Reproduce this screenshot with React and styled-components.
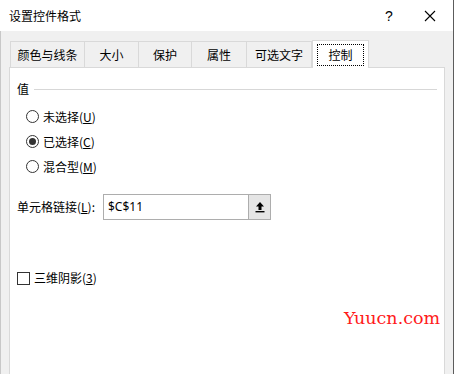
import React from 'react';
import styled, { createGlobalStyle } from 'styled-components';

const tabs = [
  { id: 'color', label: '颜色与线条', width: 75 },
  { id: 'size', label: '大小', width: 54 },
  { id: 'protect', label: '保护', width: 53 },
  { id: 'attr', label: '属性', width: 55 },
  { id: 'alt', label: '可选文字', width: 65 },
  { id: 'control', label: '控制', width: 57, active: true },
];

const options = [
  { id: 'u', label: '未选择', key: 'U' },
  { id: 'c', label: '已选择', key: 'C', checked: true },
  { id: 'm', label: '混合型', key: 'M' },
];

const GlobalStyle = createGlobalStyle`
  html, body {
    margin: 0;
    padding: 0;
    background: #ffffff;
  }
  body {
    font-family: "Noto Sans CJK SC", "Noto Sans", sans-serif;
    font-size: 12px;
    color: #000;
  }
`;

const App = () => {
  return (
    <>
      <GlobalStyle />
      <Window>
        <TitleBar>
          <Title>设置控件格式</Title>
          <Help>?</Help>
          <CloseButton>
            <svg width="12" height="12" viewBox="0 0 12 12">
              <path d="M1 1 L11 11 M11 1 L1 11" stroke="#000" strokeWidth="1.1" />
            </svg>
          </CloseButton>
        </TitleBar>
        <Body>
          <TabRow>
            {tabs.map((tab) => (
              <Tab key={tab.id} $active={tab.active} style={{ width: tab.width }}>
                <TabLabel $active={tab.active}>{tab.label}</TabLabel>
              </Tab>
            ))}
          </TabRow>
          <Panel>
            <Legend>
              <span>值</span>
              <Rule />
            </Legend>
            <RadioGroup>
              {options.map((opt) => (
                <RadioRow key={opt.id}>
                  <RadioCircle $checked={opt.checked} />
                  <span>
                    {opt.label}(<u>{opt.key}</u>)
                  </span>
                </RadioRow>
              ))}
            </RadioGroup>
            <LinkRow>
              <span>
                单元格链接(<u>L</u>):
              </span>
              <InputBox>
                <InputText>$C$11</InputText>
                <PickButton>
                  <svg width="10" height="12" viewBox="0 0 10 12">
                    <path d="M5 1 L9 5.5 L6.5 5.5 L6.5 9 L3.5 9 L3.5 5.5 L1 5.5 Z" fill="#000" />
                    <rect x="0.5" y="10" width="9" height="1.4" fill="#000" />
                  </svg>
                </PickButton>
              </InputBox>
            </LinkRow>
            <CheckRow>
              <CheckBox />
              <span>
                三维阴影(<u>3</u>)
              </span>
            </CheckRow>
            <Watermark>Yuucn.com</Watermark>
          </Panel>
        </Body>
      </Window>
    </>
  );
};

const Window = styled.div`
  width: 454px;
  height: 374px;
  box-sizing: border-box;
  display: flex;
  flex-direction: column;
  background: #f0f0f0;
  border-right: 1px solid #5c5c5c;
  overflow: hidden;
`;

const TitleBar = styled.div`
  height: 31px;
  flex-shrink: 0;
  display: flex;
  align-items: center;
  background: #ffffff;
  padding-left: 9px;
`;

const Title = styled.div`
  flex: 1;
  font-size: 12px;
  line-height: 16px;
`;

const Help = styled.div`
  font-family: "Liberation Sans", sans-serif;
  font-size: 14px;
  width: 20px;
  text-align: center;
  margin-right: 25px;
`;

const CloseButton = styled.div`
  width: 12px;
  height: 12px;
  display: flex;
  margin-right: 17px;
`;

const Body = styled.div`
  flex: 1;
  display: flex;
  flex-direction: column;
  padding: 9px 8px 0 8px;
  border-left: 1px solid #c8c8c8;
  min-height: 0;
`;

const TabRow = styled.div`
  display: flex;
  align-items: flex-end;
  padding-left: 1px;
  height: 27px;
  flex-shrink: 0;
`;

const Tab = styled.div`
  box-sizing: border-box;
  height: ${(p) => (p.$active ? '28px' : '26px')};
  display: flex;
  align-items: center;
  justify-content: center;
  background: ${(p) => (p.$active ? '#ffffff' : '#f0f0f0')};
  border: 1px solid #d9d9d9;
  border-bottom: none;
  border-left: ${(p) => (p.$active ? '1px solid #d9d9d9' : 'none')};
  margin-bottom: ${(p) => (p.$active ? '-1px' : '0')};
  position: relative;
  z-index: ${(p) => (p.$active ? 1 : 0)};
  &:first-child {
    border-left: 1px solid #d9d9d9;
  }
`;

const TabLabel = styled.span`
  font-size: 12px;
  line-height: 16px;
  padding: ${(p) => (p.$active ? '2px 10px' : '0')};
  outline: ${(p) => (p.$active ? '1px dotted #000' : 'none')};
`;

const Panel = styled.div`
  flex: 1;
  position: relative;
  display: flex;
  flex-direction: column;
  background: #ffffff;
  border: 1px solid #d9d9d9;
  border-bottom: none;
  padding: 13px 0 0 7px;
`;

const Legend = styled.div`
  display: flex;
  align-items: center;
  gap: 5px;
  height: 16px;
  line-height: 16px;
  padding-right: 7px;
`;

const Rule = styled.div`
  flex: 1;
  height: 1px;
  background: #d7d7d7;
`;

const RadioGroup = styled.div`
  display: flex;
  flex-direction: column;
  margin-top: 7px;
  padding-left: 9px;
`;

const RadioRow = styled.div`
  display: flex;
  align-items: center;
  gap: 4px;
  height: 25px;
  line-height: 16px;
`;

const RadioCircle = styled.span`
  box-sizing: border-box;
  width: 13px;
  height: 13px;
  border-radius: 50%;
  border: 1px solid #333;
  display: flex;
  align-items: center;
  justify-content: center;
  &::after {
    content: '';
    width: 7px;
    height: 7px;
    border-radius: 50%;
    background: #333;
    display: ${(p) => (p.$checked ? 'block' : 'none')};
  }
`;

const LinkRow = styled.div`
  display: flex;
  align-items: center;
  gap: 8px;
  margin-top: 15px;
  height: 26px;
  line-height: 16px;
`;

const InputBox = styled.div`
  box-sizing: border-box;
  width: 168px;
  height: 26px;
  display: flex;
  align-items: stretch;
  border: 1px solid #adadad;
  background: #fff;
`;

const InputText = styled.span`
  flex: 1;
  font-family: "Noto Sans", sans-serif;
  font-size: 12px;
  line-height: 24px;
  padding-left: 4px;
`;

const PickButton = styled.span`
  width: 21px;
  display: flex;
  align-items: center;
  justify-content: center;
  background: #e5e5e5;
  border-left: 1px solid #adadad;
`;

const CheckRow = styled.div`
  display: flex;
  align-items: center;
  gap: 4px;
  margin-top: 50px;
  height: 16px;
  line-height: 16px;
`;

const CheckBox = styled.span`
  box-sizing: border-box;
  width: 13px;
  height: 13px;
  border: 1px solid #333;
`;

const Watermark = styled.div`
  position: absolute;
  left: 334px;
  top: 240px;
  font-family: "DejaVu Serif", serif;
  font-size: 17.5px;
  color: #ff1a1a;
`;

export default App;
